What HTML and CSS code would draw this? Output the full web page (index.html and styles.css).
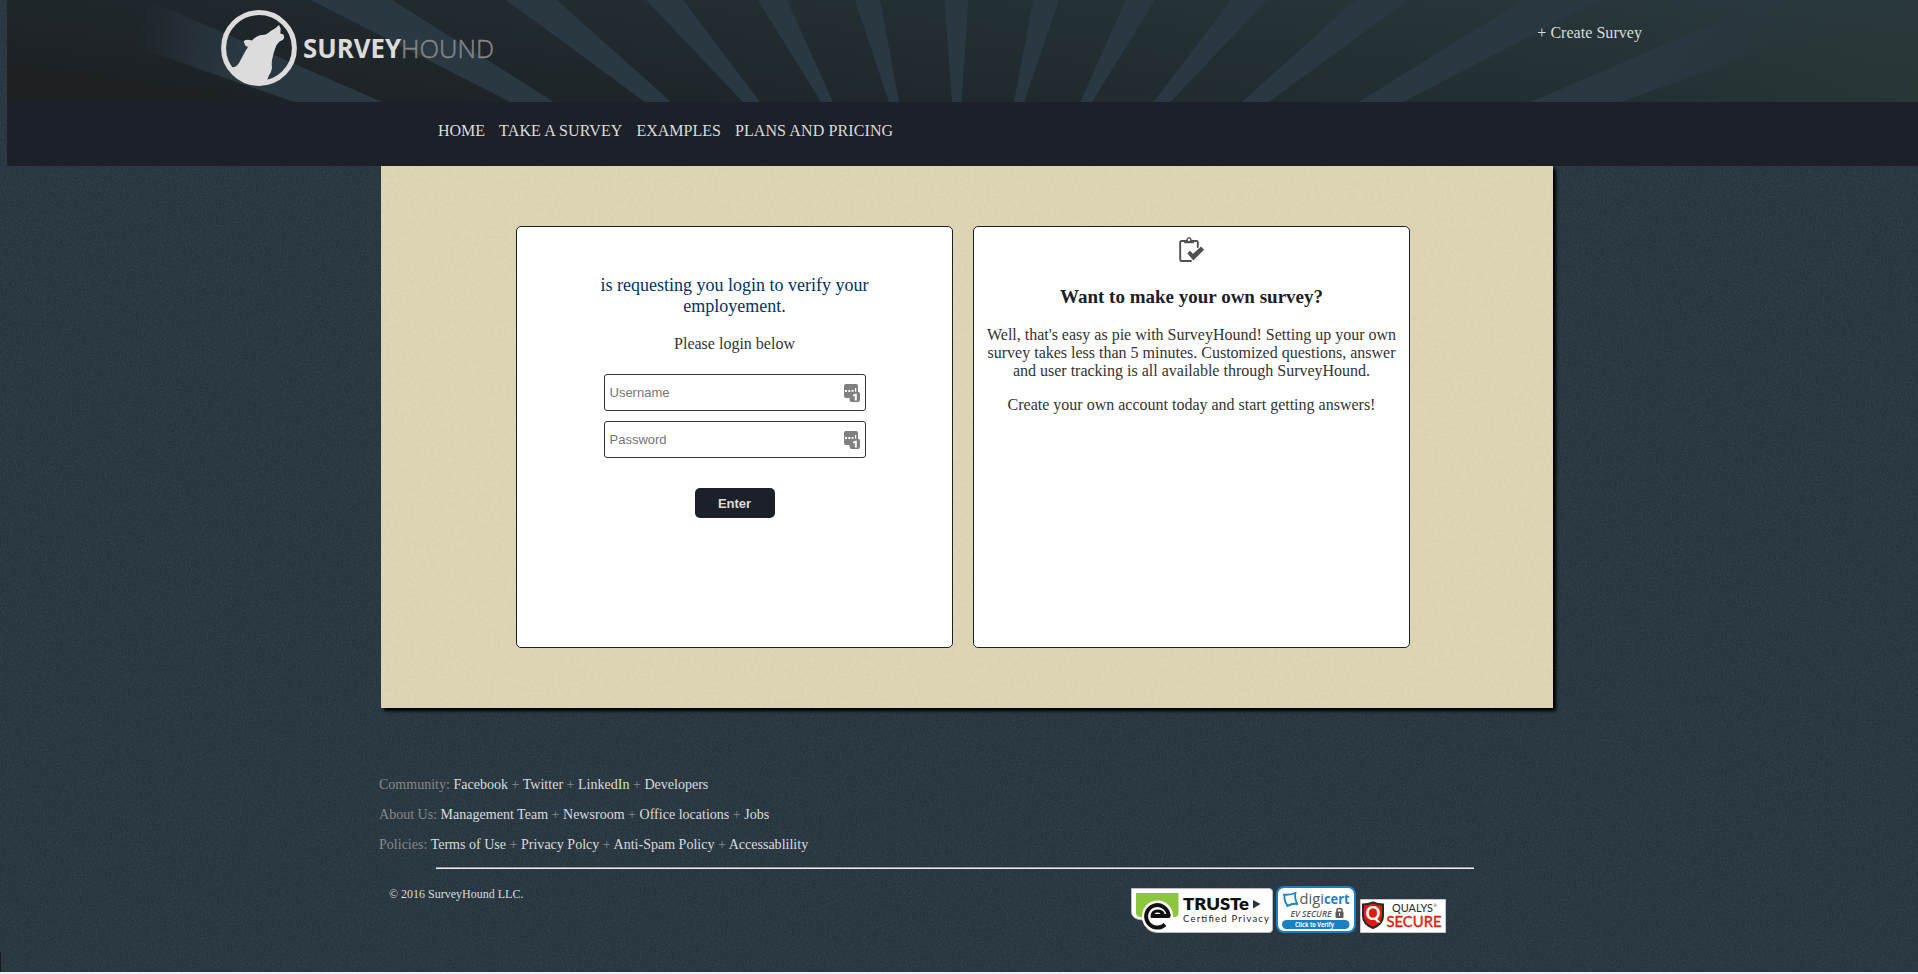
FILE: index.html
```html
<!DOCTYPE html>
<html lang="en">
<head>
<meta charset="utf-8">
<title>SurveyHound</title>
<link rel="stylesheet" href="styles.css">
</head>
<body>
<div class="page">
  <svg class="texture" aria-hidden="true">
    <filter id="grain" x="0" y="0" width="100%" height="100%" color-interpolation-filters="sRGB">
      <feTurbulence type="fractalNoise" baseFrequency="0.55" numOctaves="2" seed="4"/>
      <feColorMatrix values="0 0 0 0 0.27  0 0 0 0 0.36  0 0 0 0 0.41  1.4 0 0 0 -0.35"/>
    </filter>
    <rect width="100%" height="100%" filter="url(#grain)"/>
  </svg>
  <header class="header">
    <svg class="rays" viewBox="7 0 1911 102" preserveAspectRatio="none" aria-hidden="true">
      <defs>
        <linearGradient id="fadeLeft" gradientUnits="userSpaceOnUse" x1="145" y1="0" x2="245" y2="30">
          <stop offset="0" stop-color="#2a3842" stop-opacity="0"/><stop offset="1" stop-color="#2a3842"/>
        </linearGradient>
        <linearGradient id="fadeRight" gradientUnits="userSpaceOnUse" x1="1640" y1="0" x2="1790" y2="0">
          <stop offset="0" stop-color="#2b3842"/><stop offset="1" stop-color="#2b3842" stop-opacity="0"/>
        </linearGradient>
      </defs>
      <path fill="url(#fadeLeft)" d="M3 0H148L382 102H294Z"/>
      <path fill="#2a3842" d="M311 0H392L554 102H510ZM506 0H557L671 102H645ZM646 0H683L760 102H743ZM758 0H787L833 102H821ZM855 0H880L899 102H889ZM944.5 0H968.5L961.5 102H952ZM1033 0H1059L1024 102H1014ZM1126 0H1155L1092 102H1080ZM1231 0H1267L1170.5 102H1153.5ZM1355.5 0H1408L1268.500 102H1242ZM1523 0H1600L1403 102H1358.500Z"/>
      <path fill="url(#fadeRight)" d="M1769 0H1909L1620 102H1531Z"/>
    </svg>
    <svg class="logo" viewBox="0 0 280 80" role="img">
      <circle cx="39" cy="40" r="35.400" fill="none" stroke="#dcdcdc" stroke-width="5"/>
      <path fill="#dcdcdc" d="M59 17L60.700 20.500L60.300 25.500L63.500 26.500L64.200 30Q63.500 32 59.500 33.500Q56.500 36 55 41Q53.500 45 52.500 50Q51.300 53 52 60Q51.500 64 48.700 68L47.200 72L50 71.500L45 76L28 75L15 63L11.500 59Q16 60 19 55L26 42Q28.500 39 27.500 38.500Q25 38.500 24.500 35.500L23.600 33Q27 31 32 32.500Q36 28 41 27Q46 27.500 50 23.500Q56 20.500 59 17Z"/>
      <text x="83" y="49.500" class="logo-bold" textLength="98" lengthAdjust="spacingAndGlyphs">SURVEY</text>
      <text x="181" y="49.500" class="logo-light" textLength="93" lengthAdjust="spacingAndGlyphs">HOUND</text>
    </svg>
    <a class="create">+ Create Survey</a>
  </header>
  <nav class="nav">
    <a>HOME</a><a class="wide">TAKE A SURVEY</a><a>EXAMPLES</a><a class="wide">PLANS AND PRICING</a>
  </nav>

  <main class="panel">
    <svg class="texture" aria-hidden="true">
      <filter id="paper" x="0" y="0" width="100%" height="100%">
        <feTurbulence type="fractalNoise" baseFrequency="0.3" numOctaves="4" seed="9"/>
        <feColorMatrix values="0 0 0 0 0.62  0 0 0 0 0.56  0 0 0 0 0.4  1.6 0 0 0 -0.64"/>
      </filter>
      <rect width="100%" height="100%" filter="url(#paper)"/>
    </svg>
    <section class="card login">
      <p class="request">is requesting you login to verify your employement.</p>
      <p class="hint">Please login below</p>
      <label class="field">
        <input type="text" placeholder="Username">
        <svg class="key" viewBox="0 0 16 18"><rect width="14" height="14" rx="2" fill="#808080"/><path fill="#fff" d="M1 6h2v2H1zM4.300 6h2v2h-2zM7.600 6h2v2h-2zM11 4h1.200v4H11z"/><rect x="5.500" y="7.700" width="10.500" height="10.300" rx="2.200" fill="#808080"/><path fill="#fff" d="M9 10.800L11.500 9.700H12.800V16.500H10.800V12L9 12.300Z"/></svg>
      </label>
      <label class="field">
        <input type="password" placeholder="Password">
        <svg class="key" viewBox="0 0 16 18"><rect width="14" height="14" rx="2" fill="#808080"/><path fill="#fff" d="M1 6h2v2H1zM4.300 6h2v2h-2zM7.600 6h2v2h-2zM11 4h1.200v4H11z"/><rect x="5.500" y="7.700" width="10.500" height="10.300" rx="2.200" fill="#808080"/><path fill="#fff" d="M9 10.800L11.500 9.700H12.800V16.500H10.800V12L9 12.300Z"/></svg>
      </label>
      <button class="enter">Enter</button>
    </section>
    <section class="card promo">
      <svg class="clipboard" viewBox="0 0 26 26">
        <path fill="none" stroke="#505050" stroke-width="1.900" stroke-linejoin="round" stroke-linecap="round" d="M6 4H2.500Q1.200 4 1.200 5.300V22.700Q1.200 24 2.500 24H12M14 4H17.500Q18.800 4 18.800 5.300V10"/>
        <path fill="#505050" fill-rule="evenodd" d="M5.200 6.200V4Q5.200 2.800 7.300 2.700Q7.800 0 10 0T12.700 2.700Q14.800 2.800 14.800 4V6.200ZM10 1.500A1.300 1.300 0 1 0 10 4.100A1.300 1.300 0 0 0 10 1.500Z"/>
        <path fill="#505050" d="M8.300 16.300L11 13.800L14 16.700L22 9.600L25 12.800L14.300 23.500Z"/>
      </svg>
      <h3>Want to make your own survey?</h3>
      <p>Well, that's easy as pie with SurveyHound! Setting up your own survey takes less than 5 minutes. Customized questions, answer and user tracking is all available through SurveyHound.</p>
      <p>Create your own account today and start getting answers!</p>
    </section>
  </main>

  <footer class="footer">
    <div class="links">Community: <a>Facebook</a> + <a>Twitter</a> + <a>LinkedIn</a> + <a>Developers</a></div>
    <div class="links">About Us: <a>Management Team</a> + <a>Newsroom</a> + <a>Office locations</a> + <a>Jobs</a></div>
    <div class="links">Policies: <a>Terms of Use</a> + <a>Privacy Polcy</a> + <a>Anti-Spam Policy</a> + <a>Accessablility</a></div>
    <div class="rule"></div>
    <div class="bottom">
      <span class="copyright">© 2016 SurveyHound LLC.</span>
      <div class="badges">
        <svg class="truste" viewBox="0 0 142 45">
          <path fill="#fff" stroke="#b9bcbe" stroke-width="1" d="M.5.500H138Q141.500.500 141.500 4V41Q141.500 44.500 138 44.500H27Q15 44.500 11.500 32Q.5 31 .5 24Z"/>
          <path fill="#8cc63f" d="M5 5H47.500V25Q47.500 29 43.500 29H9.500Q5 29 5 24.500Z"/>
          <circle cx="26.500" cy="28" r="15.500" fill="#fff"/>
          <path fill="none" stroke="#111" stroke-width="4" d="M34 36.500A11.200 11.200 0 1 1 37.500 27.500"/>
          <path fill="#111" d="M19.500 28Q20 21.500 26.500 21.500T33.500 26H39.500V29Q39 30 37 30H20Z"/>
          <path fill="#fff" d="M23.500 26Q24.500 24.600 26.500 24.600T29.500 26Z"/>
          <text x="52" y="22" class="t-name" textLength="66" lengthAdjust="spacingAndGlyphs">TRUSTe</text>
          <path fill="#333" d="M122 12L129.500 16L122 20.500Z"/>
          <text x="52" y="34" class="t-sub" textLength="86" lengthAdjust="spacing">Certified Privacy</text>
        </svg>
        <svg class="digicert" viewBox="0 0 80 47">
          <rect x="1" y="1" width="78" height="45" rx="7" fill="#fff" stroke="#1a80bf" stroke-width="2"/>
          <path fill="none" stroke="#1b84c6" stroke-width="1.800" d="M7 8.500Q14 9.500 20.500 6.500M19 7Q18.500 13 21.500 19M21 17.500Q15 17.500 10.500 20.500M12 20Q8 16 8.500 9"/>
          <text x="23.500" y="18" class="d-digi" textLength="24.500" lengthAdjust="spacingAndGlyphs">digi</text>
          <text x="48" y="18" class="d-cert" textLength="25.500" lengthAdjust="spacingAndGlyphs">cert</text>
          <text x="14.500" y="31" class="d-ev" textLength="41" lengthAdjust="spacingAndGlyphs">EV SECURE</text>
          <rect x="59.500" y="25.500" width="8" height="6.500" rx="1" fill="#58595b"/>
          <path fill="none" stroke="#58595b" stroke-width="1.500" d="M61 26V24Q61 22.500 63.500 22.500T66 24V26"/>
          <path stroke="#fff" d="M63.500 27V30"/>
          <rect x="6" y="34" width="67.500" height="9" rx="4.500" fill="#1a80bf"/>
          <text x="19" y="41" class="d-verify" textLength="39" lengthAdjust="spacingAndGlyphs">Click to Verify</text>
        </svg>
        <svg class="qualys" viewBox="0 0 86 34">
          <path fill="#fff" stroke="#c8c8c8" d="M.5.500H85.500V33.500H.5Z"/>
          <path fill="#e11a0c" stroke="#26282b" stroke-width="2" d="M3 5.500Q8 5.500 13 3.500Q18 5.500 23 5.500V17Q23 25 13 29Q3 25 3 17Z"/>
          <text x="5.500" y="20.500" class="q-letter" textLength="15" lengthAdjust="spacingAndGlyphs">Q</text>
          <text x="32" y="12.800" class="q-name" textLength="41" lengthAdjust="spacingAndGlyphs">QUALYS</text>
          <text x="73.500" y="8" class="q-mark">®</text>
          <text x="26.500" y="27.500" class="q-secure" textLength="55" lengthAdjust="spacingAndGlyphs">SECURE</text>
        </svg>
      </div>
    </div>
  </footer>
  <span class="edge"></span>
</div>
</body>
</html>
```
FILE: styles.css
```css
* { box-sizing: border-box; }
body {
  margin: 0;
  height: 974px;
  overflow: hidden;
  background: #f0f0f0;
  font-family: "Liberation Serif", "Times New Roman", serif;
  font-size: 16px;
  color: #333;
}
.page {
  position: relative;
  height: 972px;
  display: flex;
  flex-direction: column;
  background: #26333c;
  overflow: hidden;
}
.texture {
  position: absolute;
  inset: 0;
  width: 100%;
  height: 100%;
  opacity: .4;
}
.header {
  position: relative;
  margin-left: 7px;
  height: 102px;
  flex: none;
  display: flex;
  justify-content: space-between;
  align-items: flex-start;
  padding: 8px 276px 0 213px;
  background:
    radial-gradient(ellipse 260px 110px at 100% 90%, rgba(44, 56, 52, .5), transparent),
    linear-gradient(8deg, #1d2124 10%, #20292e 38%, #233033 62%, #29383c 92%);
}
.rays {
  position: absolute;
  inset: 0;
  width: 100%;
  height: 102px;
}
.logo { position: relative; width: 280px; height: 80px; }
.logo-bold, .logo-light { font-family: "Open Sans", "Noto Sans", sans-serif; font-size: 26.500px; }
.logo-bold { font-weight: 700; fill: #dcdcdc; }
.logo-light { font-weight: 300; fill: #858585; stroke: #858585; stroke-width: .5px; }
.create { position: relative; margin-top: 16px; line-height: 18px; color: #dcdcdc; letter-spacing: .04px; }
.nav {
  position: relative;
  flex: none;
  margin-left: 7px;
  height: 64px;
  padding: 20px 0 0 431px;
  display: flex;
  gap: 14px;
  line-height: 18px;
  background: #1c2028;
  color: #dcdcdc;
}
.nav .wide { letter-spacing: .11px; }
.panel {
  position: relative;
  flex: none;
  width: 1172px;
  height: 542px;
  margin-left: 381px;
  padding: 60px 135px;
  display: flex;
  gap: 20px;
  background: #ded5b4;
  box-shadow: 3px 3px 3px #000;
}
.card {
  position: relative;
  width: 437px;
  height: 422px;
  background: #fff;
  border: 1px solid #1c2028;
  border-radius: 5px;
  text-align: center;
}
.login { display: flex; flex-direction: column; align-items: center; padding-top: 48px; }
.request { width: 300px; margin: 0 0 18px; font-size: 18px; line-height: 21px; color: #003366; }
.hint { margin: 0 0 21px; line-height: 18px; }
.field { position: relative; display: block; width: 262px; height: 37px; margin-bottom: 10px; }
.field input {
  display: block;
  width: 100%;
  height: 100%;
  padding: 1px 5px;
  border: 1px solid #333;
  border-radius: 3px;
  font: 13px "Liberation Sans", Arial, sans-serif;
}
.field input::placeholder { color: #757575; }
.key { position: absolute; right: 6px; top: 10px; width: 16px; height: 18px; }
.enter {
  width: 80px;
  height: 30px;
  margin-top: 20px;
  border: 0;
  border-radius: 5px;
  background: #1c2028;
  color: #dcdcdc;
  font: bold 13px "Liberation Sans", Arial, sans-serif;
}
.promo { padding: 10px 10px 0; }
.clipboard { display: block; width: 26px; height: 26px; margin: 0 auto; }
.promo h3 { margin: 23px 0 19px; font-size: 19px; line-height: 21px; color: #1c2028; }
.promo p { margin: 0 0 16px; line-height: 18px; }
.footer { position: relative; padding: 69px 0 0 379px; color: #888; }
.links { height: 30px; font-size: 14px; line-height: 16px; letter-spacing: .015px; }
.links a { color: #dcdcdc; }
.rule { width: 1038px; height: 2px; margin-left: 57px; border-top: 1px solid #9a9a9a; background: #eee; }
.bottom { display: flex; justify-content: space-between; width: 1067px; padding-left: 10px; }
.copyright { margin-top: 18px; font-size: 12px; line-height: 14px; color: #dcdcdc; }
.badges { display: flex; align-items: flex-end; height: 64px; }
.badges svg { overflow: visible; }
.truste { width: 142px; height: 45px; margin-right: 3px; }
.digicert { width: 80px; height: 47px; margin-right: 4px; }
.qualys { width: 86px; height: 34px; }
.badges text { font-family: "Open Sans", "Noto Sans", sans-serif; }
.badges .t-name { font: 800 17px "Lato", sans-serif; fill: #111; }
.badges .t-sub { font: 9.500px "Lato", sans-serif; fill: #222; }
.badges .d-digi { font-size: 14px; fill: #58595b; }
.badges .d-cert { font-size: 14px; font-weight: 700; fill: #1a80bf; }
.badges .d-ev { font-size: 8.500px; font-style: italic; font-weight: 600; fill: #58595b; }
.badges .d-verify { font-size: 6.800px; font-weight: 700; fill: #fff; }
.badges .q-letter { font: bold 18px "Lato", sans-serif; fill: #fff; }
.badges .q-name { font: 11px "Lato", sans-serif; fill: #26282b; }
.badges .q-mark { font-size: 4px; fill: #26282b; }
.badges .q-secure { font: 15px "Lato", sans-serif; fill: #e11a0c; stroke: #e11a0c; stroke-width: .4px; }
.edge { position: absolute; left: 0; bottom: 0; width: 1px; height: 20px; background: #1a1a1a; }
```
